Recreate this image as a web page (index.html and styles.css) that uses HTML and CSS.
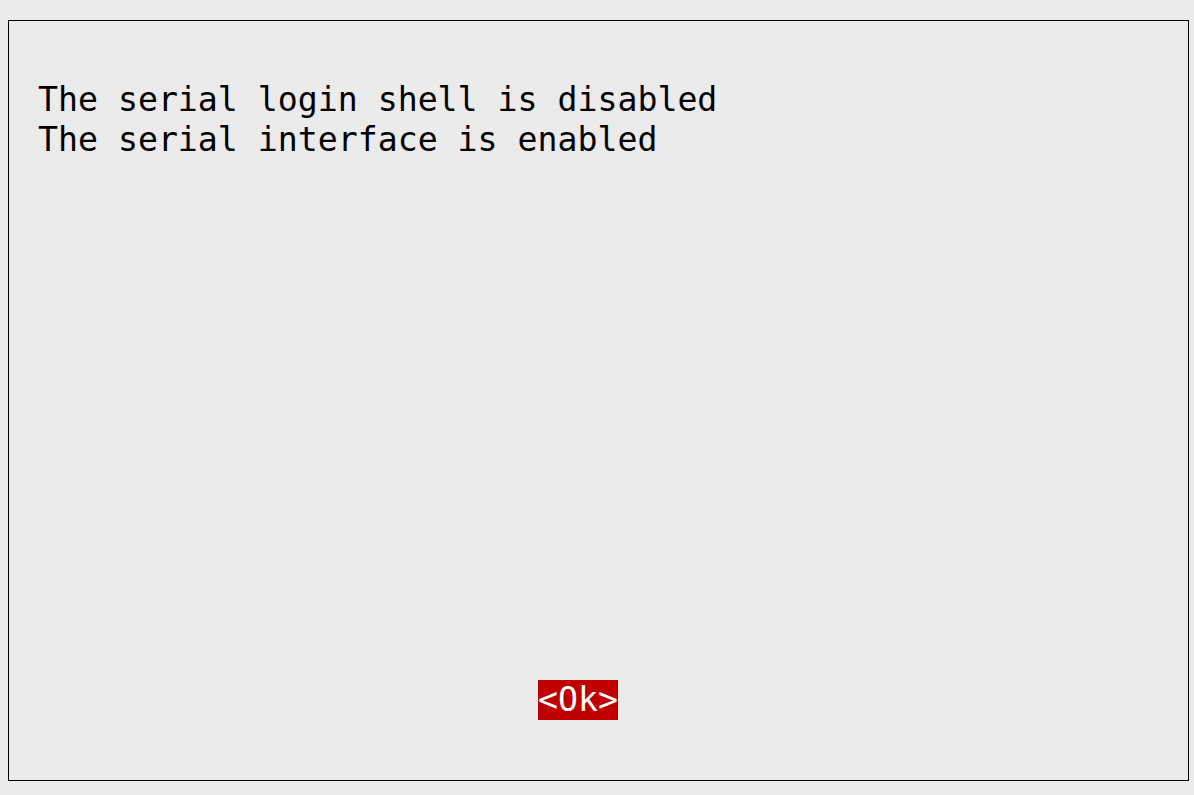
FILE: index.html
```html
<!DOCTYPE html>
<html>
<head>
<meta charset="utf-8">
<link rel="stylesheet" href="styles.css">
</head>
<body>
<div class="dialog">
  <div class="message">
    <div class="line">The serial login shell is disabled</div>
    <div class="line">The serial interface is enabled</div>
  </div>
  <div class="buttons">
    <span class="btn">&lt;Ok&gt;</span>
  </div>
</div>
</body>
</html>
```
FILE: styles.css
```css
html, body {
  margin: 0;
  padding: 0;
  background: #ebebeb;
}
body {
  font-family: "DejaVu Sans Mono", monospace;
  font-size: 33.2px;
  line-height: 40px;
  color: #000;
}
.dialog {
  box-sizing: border-box;
  margin: 20px 0 0 8px;
  width: 1181px;
  height: 761px;
  border: 1px solid #000;
  padding: 59px 0 0 29px;
}
.line {
  height: 40px;
  white-space: pre;
}
.buttons {
  margin-top: 520px;
  padding-left: 500px;
  height: 40px;
}
.btn {
  display: block;
  width: 80px;
  height: 40px;
  background: #c00000;
  color: #fff;
  white-space: pre;
}
```
